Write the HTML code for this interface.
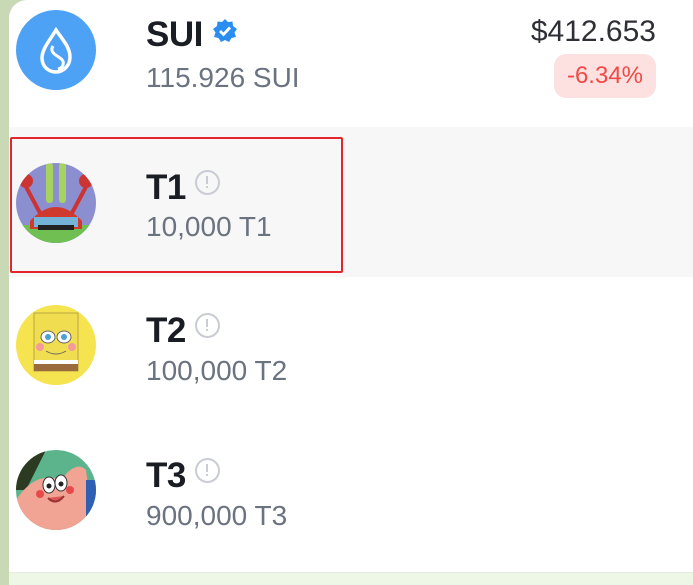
<!DOCTYPE html>
<html><head><meta charset="utf-8"><style>
html,body{margin:0;padding:0;}
body{width:693px;height:584px;overflow:hidden;background:#c9d9b5;font-family:"Liberation Sans",sans-serif;position:relative;}
.panel{position:absolute;left:9px;top:0;width:684px;height:572px;background:#fff;border-top-left-radius:18px;}
.bottom{position:absolute;left:9px;top:572px;width:684px;height:12px;background:#eef7e6;border-top:1px solid #e8ece4;}
.sel{position:absolute;left:9px;top:127px;width:684px;height:150px;background:#f7f7f8;}
.red{position:absolute;left:10px;top:137px;width:329px;height:132px;border:2.5px solid #e3262b;border-radius:2px;}
.av{position:absolute;left:16px;width:80px;height:80px;border-radius:50%;overflow:hidden;}
.t{position:absolute;left:146px;font-size:35px;font-weight:bold;color:#1b1d24;letter-spacing:-0.5px;}
.s{position:absolute;left:146px;font-size:28px;color:#6b7280;}
.warn{display:inline-block;width:21px;height:21px;border:2px solid #c9ccd3;border-radius:50%;vertical-align:4px;margin-left:9px;position:relative;}
.warn:before{content:"";position:absolute;left:9.5px;top:4px;width:2px;height:8px;background:#c9ccd3;}
.warn:after{content:"";position:absolute;left:9.5px;top:14px;width:2px;height:2px;background:#c9ccd3;}
.price{position:absolute;right:37px;top:15px;font-size:30px;color:#2e3035;}
.badge{position:absolute;left:554px;top:54px;width:102px;height:44px;border-radius:12px;background:#fde1e1;color:#ef4a46;font-size:24px;text-align:center;line-height:44px;}
</style></head><body>
<div class="panel"></div>
<div class="bottom"></div>
<div class="sel"></div>
<div class="red"></div>

<div class="av" style="top:10px;background:#4da2f6;">
<svg width="80" height="80" viewBox="0 0 80 80"><path d="M40 20 C46 29 54 37 54 47 C54 56 47 62 40 62 C32 62 26 56 26 48 C26 39 34 30 40 20 Z" fill="none" stroke="#fff" stroke-width="3.5"/><path d="M37 36 C33 42 40 45 44 48 C50 52 47 58 42 59" fill="none" stroke="#fff" stroke-width="3"/></svg>
</div>
<div class="t" style="top:15px;">SUI<svg width="26" height="26" viewBox="0 0 26 26" style="margin-left:9px;vertical-align:2px"><path d="M13 1 L16 4 L20.5 3.5 L21 8 L25 11 L22.5 14.5 L24 19 L19.5 20 L17 24 L13 22 L9 24 L6.5 20 L2 19 L3.5 14.5 L1 11 L5 8 L5.5 3.5 L10 4 Z" fill="#2a8ef0"/><path d="M8 13 L11.5 16.5 L18 9.5" fill="none" stroke="#fff" stroke-width="2.8"/></svg></div>
<div class="s" style="top:62px;">115.926 SUI</div>
<div class="price">$412.653</div>
<div class="badge">-6.34%</div>

<div class="av" style="top:163px;background:#8c8fcf;">
<svg width="80" height="80" viewBox="0 0 80 80"><rect x="0" y="62" width="80" height="18" fill="#6fbf52"/><path d="M14 58 Q40 30 66 58 L66 66 L14 66 Z" fill="#d03a2e"/><rect x="18" y="54" width="44" height="10" fill="#76b3d8"/><rect x="22" y="62" width="36" height="5" fill="#222"/><rect x="30" y="0" width="7" height="40" rx="3" fill="#a6d260"/><rect x="43" y="0" width="7" height="40" rx="3" fill="#a6d260"/><path d="M8 20 L24 50 M72 20 L56 50" stroke="#c33" stroke-width="4"/><circle cx="10" cy="18" r="7" fill="#c33"/><circle cx="70" cy="18" r="7" fill="#c33"/></svg>
</div>
<div class="t" style="top:168px;">T1<span class="warn"></span></div>
<div class="s" style="top:211px;">10,000 T1</div>

<div class="av" style="top:305px;background:#f5e34f;">
<svg width="80" height="80" viewBox="0 0 80 80"><rect x="18" y="8" width="44" height="58" fill="#f1de50" stroke="#b9a640" stroke-width="1"/><ellipse cx="32" cy="32" rx="7" ry="6" fill="#fff" stroke="#666"/><ellipse cx="48" cy="32" rx="7" ry="6" fill="#fff" stroke="#666"/><circle cx="32" cy="32" r="3" fill="#4aa0d0"/><circle cx="48" cy="32" r="3" fill="#4aa0d0"/><circle cx="24" cy="42" r="4" fill="#f59a9a"/><circle cx="56" cy="42" r="4" fill="#f59a9a"/><path d="M30 46 Q40 52 50 46" stroke="#666" fill="none"/><rect x="18" y="58" width="44" height="8" fill="#9a6b3c"/><rect x="18" y="55" width="44" height="4" fill="#fff"/></svg>
</div>
<div class="t" style="top:311px;">T2<span class="warn"></span></div>
<div class="s" style="top:355px;">100,000 T2</div>

<div class="av" style="top:450px;background:#5cb48c;">
<svg width="80" height="80" viewBox="0 0 80 80"><path d="M0 0 L30 0 L10 40 L0 40 Z" fill="#2d3a22"/><path d="M0 80 L0 50 Q20 20 45 30 Q60 10 70 20 L75 60 L80 80 Z" fill="#f1a493"/><rect x="70" y="30" width="10" height="40" fill="#2f5fb3"/><ellipse cx="33" cy="35" rx="6" ry="8" fill="#fff" stroke="#333"/><ellipse cx="45" cy="33" rx="6" ry="8" fill="#fff" stroke="#333"/><circle cx="33" cy="36" r="2.5" fill="#222"/><circle cx="45" cy="34" r="2.5" fill="#222"/><circle cx="24" cy="44" r="4" fill="#e84a4a"/><circle cx="54" cy="40" r="4" fill="#e84a4a"/><path d="M32 48 Q40 56 48 46" stroke="#933" stroke-width="2" fill="#d55"/></svg>
</div>
<div class="t" style="top:456px;">T3<span class="warn"></span></div>
<div class="s" style="top:500px;">900,000 T3</div>
</body></html>
